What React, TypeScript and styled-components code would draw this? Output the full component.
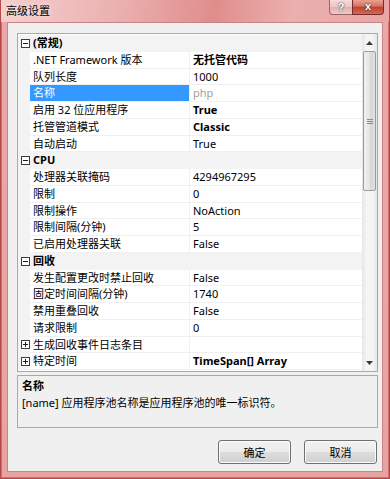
import styled, { createGlobalStyle } from 'styled-components';

const GlobalStyle = createGlobalStyle`
  body {
    margin: 0;
    background: #ffffff;
  }
  * {
    box-sizing: border-box;
  }
`;

type Prop = {
  name: string;
  value: string;
  bold?: boolean;
  selected?: boolean;
  expandable?: boolean;
};

type Section = {
  title: string;
  items: Prop[];
};

const sections: Section[] = [
  {
    title: '(常规)',
    items: [
      { name: '.NET Framework 版本', value: '无托管代码', bold: true },
      { name: '队列长度', value: '1000' },
      { name: '名称', value: 'php', selected: true },
      { name: '启用 32 位应用程序', value: 'True', bold: true },
      { name: '托管管道模式', value: 'Classic', bold: true },
      { name: '自动启动', value: 'True' },
    ],
  },
  {
    title: 'CPU',
    items: [
      { name: '处理器关联掩码', value: '4294967295' },
      { name: '限制', value: '0' },
      { name: '限制操作', value: 'NoAction' },
      { name: '限制间隔(分钟)', value: '5' },
      { name: '已启用处理器关联', value: 'False' },
    ],
  },
  {
    title: '回收',
    items: [
      { name: '发生配置更改时禁止回收', value: 'False' },
      { name: '固定时间间隔(分钟)', value: '1740' },
      { name: '禁用重叠回收', value: 'False' },
      { name: '请求限制', value: '0' },
      { name: '生成回收事件日志条目', value: '', expandable: true },
      { name: '特定时间', value: 'TimeSpan[] Array', bold: true, expandable: true },
    ],
  },
];

const ExpandBox = ({ open }: { open: boolean }) => (
  <svg width="9" height="9" viewBox="0 0 9 9">
    <rect x="0.5" y="0.5" width="8" height="8" fill="#fff" stroke="#3c3c3c" />
    <line x1="2" y1="4.5" x2="7" y2="4.5" stroke="#1e1e1e" />
    {!open && <line x1="4.5" y1="2" x2="4.5" y2="7" stroke="#1e1e1e" />}
  </svg>
);

const Arrow = ({ up }: { up: boolean }) => (
  <svg width="7" height="4" viewBox="0 0 7 4">
    <path d={up ? 'M0 4 L3.5 0 L7 4 Z' : 'M0 0 L3.5 4 L7 0 Z'} fill="#3a3a3a" />
  </svg>
);

const App = () => {
  return (
    <>
      <GlobalStyle />
      <Window>
        <TitleBar>
          <Title>高级设置</Title>
          <CaptionButtons>
            <HelpButton>?</HelpButton>
            <CloseButton>x</CloseButton>
          </CaptionButtons>
        </TitleBar>
        <Client>
          <Grid>
            <Rows>
              {sections.map((section) => (
                <div key={section.title}>
                  <CategoryRow>
                    <Margin>
                      <ExpandBox open />
                    </Margin>
                    <CategoryLabel>{section.title}</CategoryLabel>
                  </CategoryRow>
                  {section.items.map((item) => (
                    <PropRow key={item.name}>
                      <Margin>{item.expandable && <ExpandBox open={false} />}</Margin>
                      <NameCell $selected={item.selected}>{item.name}</NameCell>
                      <ValueCell $bold={item.bold} $muted={item.selected}>
                        {item.value}
                      </ValueCell>
                    </PropRow>
                  ))}
                </div>
              ))}
            </Rows>
            <ScrollBar>
              <ScrollButton>
                <Arrow up />
              </ScrollButton>
              <Track>
                <Thumb>
                  <Grip />
                </Thumb>
              </Track>
              <ScrollButton>
                <Arrow up={false} />
              </ScrollButton>
            </ScrollBar>
          </Grid>
          <Description>
            <DescTitle>名称</DescTitle>
            <DescText>[name] 应用程序池名称是应用程序池的唯一标识符。</DescText>
          </Description>
          <Buttons>
            <DialogButton>确定</DialogButton>
            <DialogButton>取消</DialogButton>
          </Buttons>
        </Client>
      </Window>
    </>
  );
};

const font = `"Noto Sans", "Noto Sans CJK SC", sans-serif`;

const Window = styled.div`
  width: 390px;
  height: 479px;
  display: flex;
  flex-direction: column;
  font-family: ${font};
  font-size: 11px;
  color: #000;
  background: linear-gradient(180deg, #f2c4c3 0px, #e9a9a8 22px, #e6a3a2 100%);
  border: 1px solid #b5494a;
  border-top: none;
  box-shadow: inset 1px 0 0 #d46c6c, inset -1px 0 0 #d46c6c, inset 0 -1px 0 #d46c6c;
`;

const TitleBar = styled.div`
  height: 22px;
  display: flex;
  align-items: flex-start;
  padding-left: 5px;
  background: linear-gradient(100deg, #f4cfce 0%, #eab1b0 30%, #e08d8c 55%, #eab0ae 75%, #e8a6a5 100%);
`;

const Title = styled.div`
  margin-top: 3px;
  font-size: 11px;
  line-height: 16px;
  text-shadow: 0 0 6px rgba(255, 255, 255, 0.9);
`;

const CaptionButtons = styled.div`
  margin-left: auto;
  margin-right: 5px;
  display: flex;
  height: 15px;
`;

const HelpButton = styled.div`
  width: 23px;
  height: 15px;
  border: 1px solid #9a6565;
  border-top: none;
  border-right: none;
  border-bottom-left-radius: 4px;
  background: linear-gradient(180deg, #f6dada 0%, #eec3c3 50%, #e4aeae 51%, #eecaca 100%);
  color: #fff;
  font-family: "Liberation Sans", sans-serif;
  font-weight: bold;
  font-size: 11px;
  line-height: 14px;
  text-align: center;
  text-shadow: 0 0 1px #444, 0 0 2px #555;
`;

const CloseButton = styled.div`
  width: 32px;
  height: 15px;
  border: 1px solid #7a2b2b;
  border-top: none;
  border-bottom-right-radius: 4px;
  background: linear-gradient(180deg, #e8a293 0%, #d6705f 45%, #c2412d 50%, #cf6a52 100%);
  color: #fff;
  font-family: "Liberation Sans", sans-serif;
  font-weight: bold;
  font-size: 11px;
  line-height: 13px;
  text-align: center;
  text-shadow: 0 0 1px #333, 0 0 2px #333;
`;

const Client = styled.div`
  flex: 1;
  margin: 0 6px 6px 6px;
  background: #f0f0f0;
  border: 1px solid #c98585;
  padding: 10px 4px 0 9px;
  display: flex;
  flex-direction: column;
`;

const Grid = styled.div`
  height: 339px;
  display: flex;
  border: 1px solid #a9a9a9;
  background: #ffffff;
`;

const Rows = styled.div`
  flex: 1;
  padding-top: 1px;
  overflow: hidden;
`;

const Row = styled.div`
  height: 16.75px;
  display: grid;
  grid-template-columns: 12px 160px 1fr;
  line-height: 16px;
  white-space: nowrap;
`;

const CategoryRow = styled(Row)`
  background: #f3f3f3;
`;

const PropRow = styled(Row)`
  background: #ffffff;
`;

const Margin = styled.div`
  background: #f3f3f3;
  display: flex;
  align-items: center;
  justify-content: center;
  padding-left: 2px;
`;

const CategoryLabel = styled.div`
  grid-column: 2 / 4;
  padding-left: 3px;
  font-weight: bold;
`;

const NameCell = styled.div<{ $selected?: boolean }>`
  padding-left: 3px;
  border-right: 1px solid #f0f0f0;
  border-bottom: 1px solid #f0f0f0;
  background: ${(p) => (p.$selected ? '#3399ff' : 'transparent')};
  color: ${(p) => (p.$selected ? '#ffffff' : '#000000')};
  overflow: hidden;
`;

const ValueCell = styled.div<{ $bold?: boolean; $muted?: boolean }>`
  padding-left: 3px;
  border-bottom: 1px solid #f0f0f0;
  font-weight: ${(p) => (p.$bold ? 'bold' : 'normal')};
  color: ${(p) => (p.$muted ? '#a0a0a0' : '#000000')};
  overflow: hidden;
`;

const ScrollBar = styled.div`
  width: 15px;
  display: flex;
  flex-direction: column;
  background: linear-gradient(90deg, #e6e6e6, #f5f5f5 30%, #f5f5f5 70%, #e6e6e6);
`;

const ScrollButton = styled.div`
  height: 17px;
  display: flex;
  align-items: center;
  justify-content: center;
`;

const Track = styled.div`
  flex: 1;
  padding: 0 1px;
`;

const Thumb = styled.div`
  height: 140px;
  border: 1px solid #9b9b9b;
  border-radius: 2px;
  background: linear-gradient(90deg, #f1f1f1 0%, #e5e5e5 50%, #d6d6d6 51%, #e0e0e0 100%);
  display: flex;
  align-items: center;
  justify-content: center;
`;

const Grip = styled.div`
  width: 6px;
  height: 5px;
  border-top: 1px solid #8a8a8a;
  border-bottom: 1px solid #8a8a8a;
  position: relative;
  &::after {
    content: '';
    position: absolute;
    left: 0;
    right: 0;
    top: 1px;
    border-top: 1px solid #8a8a8a;
  }
`;

const Description = styled.div`
  margin-top: 3px;
  height: 53px;
  border: 1px solid #a9a9a9;
  background: #f0f0f0;
  padding: 1px 4px;
  line-height: 17px;
`;

const DescTitle = styled.div`
  font-weight: bold;
`;

const DescText = styled.div``;

const Buttons = styled.div`
  margin-top: 12px;
  display: flex;
  justify-content: flex-end;
  gap: 13px;
  padding-right: 1px;
`;

const DialogButton = styled.button`
  width: 73px;
  height: 24px;
  border: 1px solid #707070;
  border-radius: 3px;
  font-family: ${font};
  font-size: 11px;
  color: #000;
  background: linear-gradient(180deg, #f2f2f2 0%, #ebebeb 50%, #dddddd 51%, #cfcfcf 100%);
  box-shadow: inset 0 0 0 1px #fbfbfb;
  padding: 0;
`;

export default App;
